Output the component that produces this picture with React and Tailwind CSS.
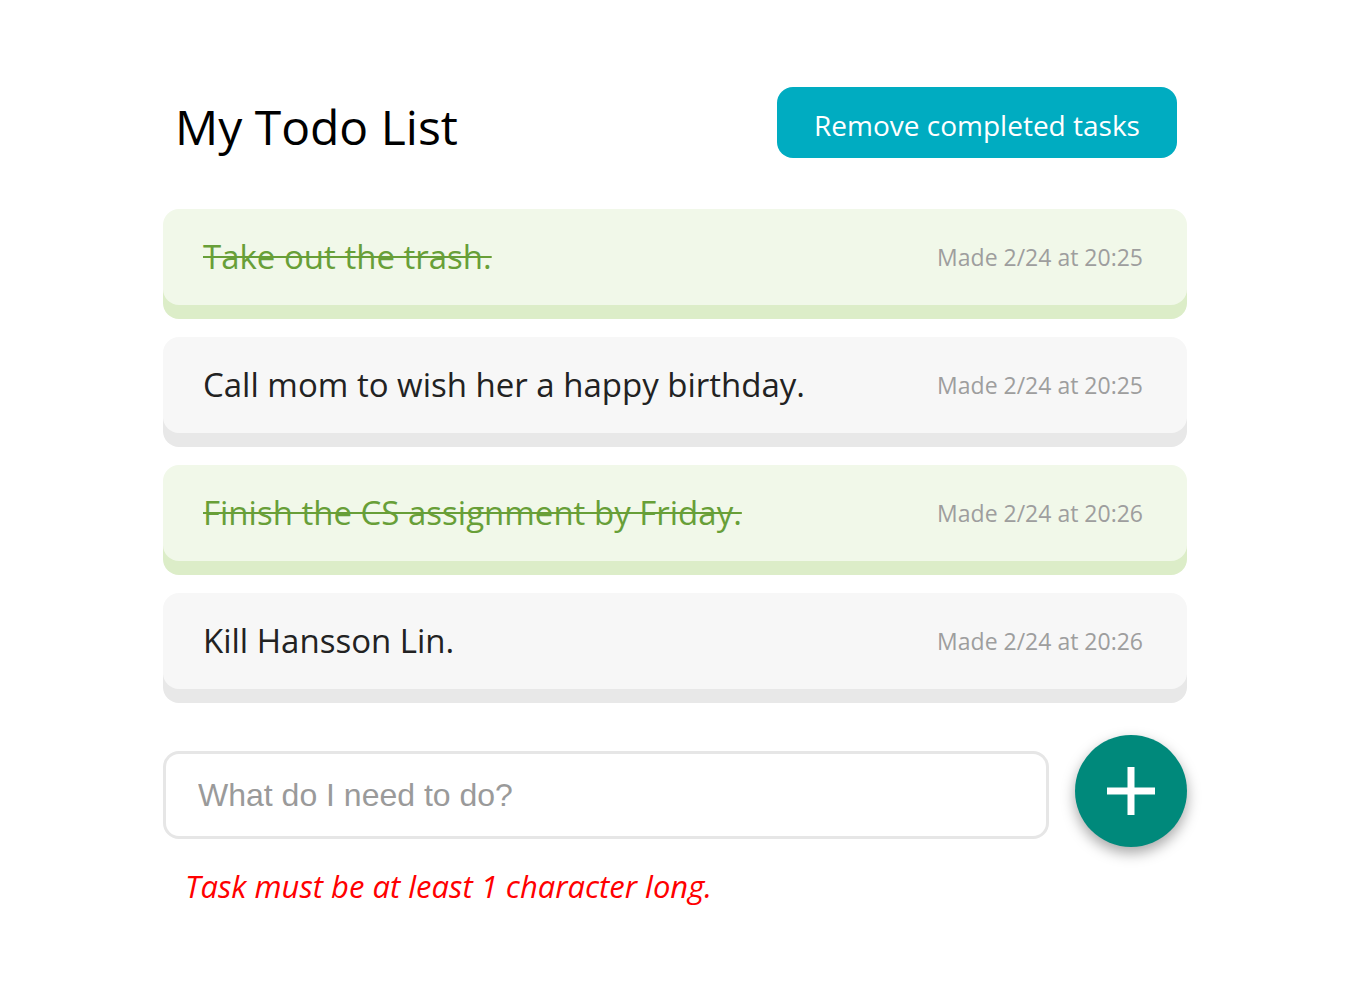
import React, { useState } from 'react'

const todos = [
  { id: 1, text: 'Take out the trash.', done: true, made: 'Made 2/24 at 20:25' },
  { id: 2, text: 'Call mom to wish her a happy birthday.', done: false, made: 'Made 2/24 at 20:25' },
  { id: 3, text: 'Finish the CS assignment by Friday.', done: true, made: 'Made 2/24 at 20:26' },
  { id: 4, text: 'Kill Hansson Lin.', done: false, made: 'Made 2/24 at 20:26' },
]

const TodoItem = ({ todo }) => {
  return (
    <div
      className={
        todo.done
          ? 'flex h-[96px] items-center justify-between rounded-2xl bg-[#f1f8e9] pl-10 pr-11 shadow-[0_14px_0_#dcedc8]'
          : 'flex h-[96px] items-center justify-between rounded-2xl bg-[#f7f7f7] pl-10 pr-11 shadow-[0_14px_0_#e8e8e8]'
      }
    >
      <span
        className={
          todo.done
            ? 'text-[33px] text-[#689f38] line-through decoration-2'
            : 'text-[33px] text-[#222]'
        }
      >
        {todo.text}
      </span>
      <span className="text-[23px] text-[#9e9e9e]">{todo.made}</span>
    </div>
  )
}

export default function App() {
  const [task, setTask] = useState('')

  return (
    <div className="min-h-screen bg-white font-['Open_Sans',sans-serif]">
      <div className="mx-auto w-[1024px] pt-[87px]">
        {/* Header */}
        <div className="flex items-center justify-between pr-[10px]">
          <h1 className="pl-3 pt-2 text-[48px] font-normal leading-none text-black">My Todo List</h1>
          <button className="h-[71px] w-[400px] rounded-2xl bg-[#00acc1] pt-1 text-[28px] text-white">
            Remove completed tasks
          </button>
        </div>

        {/* List */}
        <div className="mt-[51px] flex flex-col gap-8">
          {todos.map((todo) => (
            <TodoItem key={todo.id} todo={todo} />
          ))}
        </div>

        {/* New task */}
        <div className="mt-[46px] flex items-start justify-between">
          <input
            value={task}
            onChange={(e) => setTask(e.target.value)}
            placeholder="What do I need to do?"
            className="mt-4 h-[88px] w-[886px] rounded-2xl border-[3px] border-[#e6e6e6] px-8 font-['Liberation_Sans',sans-serif] text-[32px] text-[#333] outline-none placeholder:text-[#9a9a9a]"
          />
          <button className="flex h-[112px] w-[112px] items-center justify-center rounded-full bg-[#00897b] shadow-[0_6px_14px_rgba(0,0,0,0.35)]">
            <svg width="48" height="48" viewBox="0 0 48 48">
              <rect x="20.5" y="0" width="7" height="48" fill="white" />
              <rect x="0" y="20.5" width="48" height="7" fill="white" />
            </svg>
          </button>
        </div>

        <p className="mt-4 pl-[22px] text-[31px] italic text-[#ff0000]">
          Task must be at least 1 character long.
        </p>
      </div>
    </div>
  )
}
